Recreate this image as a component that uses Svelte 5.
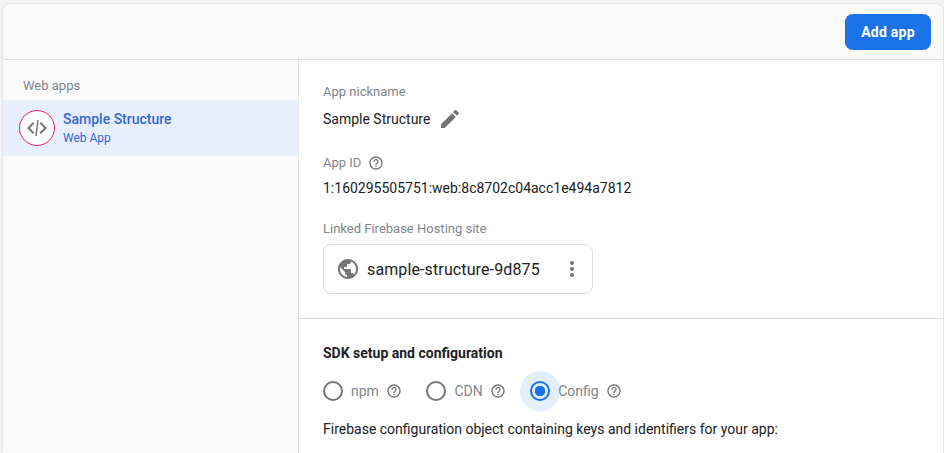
<script lang="ts">
    const help = "M11 18h2v-2h-2v2zm1-16C6.48 2 2 6.48 2 12s4.48 10 10 10 10-4.48 10-10S17.52 2 12 2zm0 18c-4.41 0-8-3.59-8-8s3.59-8 8-8 8 3.59 8 8-3.59 8-8 8zm0-14c-2.21 0-4 1.79-4 4h2c0-1.1.9-2 2-2s2 .9 2 2c0 2-3 1.75-3 5h2c0-2.25 3-2.5 3-5 0-2.21-1.79-4-4-4z";
    const options = [
        { id: "npm", label: "npm" },
        { id: "cdn", label: "CDN" },
        { id: "config", label: "Config" }
    ];
    let method = $state("config");
</script>

<div class="card">
    <header class="top">
        <button class="add">Add app</button>
    </header>
    <div class="body">
        <aside class="side">
            <div class="side-title">Web apps</div>
            <div class="app-row">
                <div class="app-icon">
                    <svg viewBox="0 0 24 24" width="24" height="24" fill="#757575">
                        <path d="M9.4 16.6 4.8 12l4.6-4.6L8 6l-6 6 6 6 1.4-1.4zm5.2 0 4.6-4.6-4.6-4.6L16 6l6 6-6 6-1.4-1.4z" />
                        <path d="M10.3 20h1.5L13.7 4h-1.5z" />
                    </svg>
                </div>
                <div>
                    <div class="app-name">Sample Structure</div>
                    <div class="app-kind">Web App</div>
                </div>
            </div>
        </aside>
        <main class="main">
            <section class="info">
                <div class="label">App nickname</div>
                <div class="nick">
                    <span>Sample Structure</span>
                    <svg viewBox="0 0 24 24" width="24" height="24" fill="#757575">
                        <path d="M3 17.25V21h3.75L17.81 9.94l-3.75-3.75L3 17.25zM20.71 7.04a1 1 0 0 0 0-1.41l-2.34-2.34a1 1 0 0 0-1.41 0l-1.83 1.83 3.75 3.75 1.83-1.83z" />
                    </svg>
                </div>
                <div class="label id-label">
                    App ID
                    <svg viewBox="0 0 24 24" width="16" height="16" fill="#757575"><path d={help} /></svg>
                </div>
                <div class="app-id">1:160295505751:web:8c8702c04acc1e494a7812</div>
                <div class="label site-label">Linked Firebase Hosting site</div>
                <div class="site">
                    <svg viewBox="0 0 24 24" width="24" height="24" fill="#757575">
                        <path d="M12 2C6.48 2 2 6.48 2 12s4.48 10 10 10 10-4.48 10-10S17.52 2 12 2zm-1 17.93c-3.95-.49-7-3.85-7-7.93 0-.62.08-1.21.21-1.79L9 15v1c0 1.1.9 2 2 2v1.93zm6.9-2.54c-.26-.81-1-1.39-1.9-1.39h-1v-3c0-.55-.45-1-1-1H8v-2h2c.55 0 1-.45 1-1V7h2c1.1 0 2-.9 2-2v-.41c2.93 1.19 5 4.06 5 7.41 0 2.08-.8 3.97-2.1 5.39z" />
                    </svg>
                    <span class="site-name">sample-structure-9d875</span>
                    <svg class="more" viewBox="0 0 24 24" width="24" height="24" fill="#757575">
                        <path d="M12 8c1.1 0 2-.9 2-2s-.9-2-2-2-2 .9-2 2 .9 2 2 2zm0 2c-1.1 0-2 .9-2 2s.9 2 2 2 2-.9 2-2-.9-2-2-2zm0 6c-1.1 0-2 .9-2 2s.9 2 2 2 2-.9 2-2-.9-2-2-2z" />
                    </svg>
                </div>
            </section>
            <section class="sdk">
                <h2>SDK setup and configuration</h2>
                <div class="radios">
                    {#each options as o}
                        <div class="opt">
                            <button
                                class="radio"
                                class:on={method === o.id}
                                aria-label={o.label}
                                onclick={() => (method = o.id)}
                            ><span class="ring"></span></button>
                            <span class="opt-label">{o.label}</span>
                            <svg viewBox="0 0 24 24" width="16" height="16" fill="#757575"><path d={help} /></svg>
                        </div>
                    {/each}
                </div>
                <p>Firebase configuration object containing keys and identifiers for your app:</p>
            </section>
        </main>
    </div>
</div>

<style>
    :global(body) {
        background: #f1f3f4;
        font-family: Roboto, "Liberation Sans", sans-serif;
        overflow: hidden;
    }
    .card {
        margin: 4px 0 0 3px;
        width: 940px;
        height: 449px;
        background: #fff;
        border-radius: 8px 8px 0 0;
        box-shadow: 0 0 2px rgba(60, 64, 67, .25);
        overflow: hidden;
        display: flex;
        flex-direction: column;
    }
    .top {
        flex: none;
        height: 56px;
        box-sizing: border-box;
        background: #fafafa;
        border-bottom: 1px solid #dadce0;
        display: flex;
        justify-content: flex-end;
        align-items: flex-start;
        padding: 10px 12px 0 0;
    }
    .add {
        width: 86px;
        height: 36px;
        border: 0;
        border-radius: 8px;
        background: #1a73e8;
        color: #fff;
        font: 700 14px Roboto, sans-serif;
        letter-spacing: .25px;
        padding: 0;
    }
    .body { flex: 1; display: flex; min-height: 0; }
    .side {
        flex: none;
        width: 296px;
        box-sizing: border-box;
        background: #fafafa;
        border-right: 1px solid #dadce0;
    }
    .side-title {
        height: 40px;
        box-sizing: border-box;
        padding: 18px 0 0 20px;
        font-size: 13px;
        line-height: 16px;
        color: #80868b;
    }
    .app-row {
        height: 56px;
        background: #e8f0fe;
        display: flex;
        align-items: center;
        gap: 8px;
        padding-left: 16px;
        margin-right: -1px;
    }
    .app-icon {
        width: 36px;
        height: 36px;
        box-sizing: border-box;
        border: 1px solid #d81b60;
        border-radius: 50%;
        background: #fff;
        display: flex;
        align-items: center;
        justify-content: center;
    }
    .app-name { font-size: 14px; font-weight: 500; line-height: 20px; color: #3367d6; margin-top: -1px; }
    .app-kind { font-size: 12px; line-height: 16px; color: #3367d6; margin-top: 1px; }
    .main { flex: 1; min-width: 0; }
    .info {
        height: 259px;
        box-sizing: border-box;
        border-bottom: 1px solid #dadce0;
        padding: 24px 0 0 24px;
    }
    .label { font-size: 13px; line-height: 16px; color: #80868b; }
    .nick {
        display: flex;
        align-items: center;
        gap: 8px;
        height: 24px;
        margin-top: 7px;
        font-size: 14px;
        color: #202124;
    }
    .id-label { display: flex; align-items: center; gap: 7px; margin-top: 24px; }
    .app-id { font-size: 14px; line-height: 20px; margin-top: 7px; color: #202124; }
    .site-label { margin-top: 23px; }
    .site {
        margin-top: 7px;
        width: 270px;
        height: 50px;
        box-sizing: border-box;
        border: 1px solid #dadce0;
        border-radius: 8px;
        display: flex;
        align-items: center;
        padding-left: 12px;
        gap: 8px;
    }
    .site-name { font-size: 16px; font-weight: 400; color: #202124; letter-spacing: .12px; margin-left: -1px; }
    .more { margin-left: auto; margin-right: 8px; }
    .sdk { padding: 26px 0 0 24px; }
    h2 { margin: 0; font-size: 14px; font-weight: 700; line-height: 16px; color: #202124; }
    .radios { display: flex; margin-top: 10px; height: 40px; align-items: center; gap: 14.5px; margin-left: -10px; }
    .opt { display: flex; align-items: center; }
    .opt svg { margin-left: 7px; }
    .opt-label { font-size: 14px; color: #80868b; margin-left: -2px; }
    .radio {
        width: 40px;
        height: 40px;
        padding: 0;
        border: 0;
        border-radius: 50%;
        background: transparent;
        display: flex;
        align-items: center;
        justify-content: center;
    }
    .radio.on { background: #e3eefc; }
    .ring {
        width: 20px;
        height: 20px;
        box-sizing: border-box;
        border: 2px solid #757575;
        border-radius: 50%;
        display: block;
    }
    .on .ring {
        border-color: #1a73e8;
        background: radial-gradient(circle, #1a73e8 0 5px, transparent 5.5px);
    }
    p { margin: 8px 0 0; font-size: 14px; line-height: 20px; color: #202124; }
</style>
